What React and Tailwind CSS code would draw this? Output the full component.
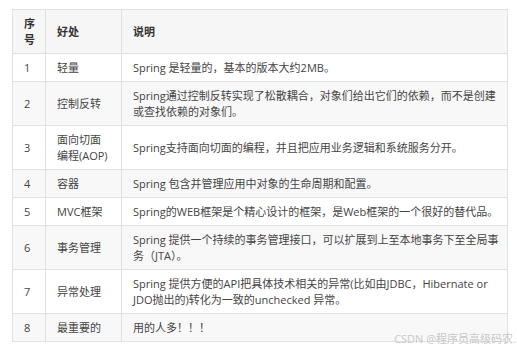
import React from 'react';

const rows = [
    { no: '1', name: ['轻量'], desc: ['Spring 是轻量的，基本的版本大约2MB。'] },
    { no: '2', name: ['控制反转'], desc: ['Spring通过控制反转实现了松散耦合，对象们给出它们的依赖，而不是创建', '或查找依赖的对象们。'] },
    { no: '3', name: ['面向切面', '编程(AOP)'], desc: ['Spring支持面向切面的编程，并且把应用业务逻辑和系统服务分开。'] },
    { no: '4', name: ['容器'], desc: ['Spring 包含并管理应用中对象的生命周期和配置。'] },
    { no: '5', name: ['MVC框架'], desc: ['Spring的WEB框架是个精心设计的框架，是Web框架的一个很好的替代品。'] },
    { no: '6', name: ['事务管理'], desc: ['Spring 提供一个持续的事务管理接口，可以扩展到上至本地事务下至全局事', '务（JTA）。'] },
    { no: '7', name: ['异常处理'], desc: ['Spring 提供方便的API把具体技术相关的异常(比如由JDBC，Hibernate or', 'JDO抛出的)转化为一致的unchecked 异常。'] },
    { no: '8', name: ['最重要的'], desc: ['用的人多！！！'] },
];

const Lines = ({ lines }) => (
    <>
        {lines.map((l, i) => (
            <span key={i} className="block whitespace-nowrap">{l}</span>
        ))}
    </>
);

const cell = 'border border-[#e1e1e1] px-[11px] pt-[6px] pb-[5px] align-middle text-left';

export default function App() {
    return (
        <div
            className="relative w-[517px] h-[349px] bg-white overflow-hidden pt-[9px] pl-[12px]"
            style={{ fontFamily: '"Open Sans", "Noto Sans CJK SC", sans-serif' }}
        >
            <table className="table-fixed border-collapse w-[495px] text-[11px] leading-[16px] text-[#444]">
                <colgroup>
                    <col className="w-[33px]" />
                    <col className="w-[76px]" />
                    <col className="w-[386px]" />
                </colgroup>
                <thead>
                    <tr className="bg-[#f6f6f6] text-[#333] font-bold">
                        <th className={`${cell} pt-[5px]`}>序<br />号</th>
                        <th className={`${cell} pt-[5px]`}>好处</th>
                        <th className={`${cell} pt-[5px]`}>说明</th>
                    </tr>
                </thead>
                <tbody>
                    {rows.map((r, i) => (
                        <tr key={r.no} className={i % 2 === 1 ? 'bg-[#f8f8f8]' : 'bg-white'}>
                            <td className={cell}>{r.no}</td>
                            <td className={cell}><Lines lines={r.name} /></td>
                            <td className={cell}><Lines lines={r.desc} /></td>
                        </tr>
                    ))}
                </tbody>
            </table>

            {/* watermark */}
            <div className="absolute right-[1px] top-[332px] text-[11px] leading-[14px] text-[#c8c8c8] whitespace-nowrap">
                CSDN @程序员高级码农.
            </div>
        </div>
    );
}
